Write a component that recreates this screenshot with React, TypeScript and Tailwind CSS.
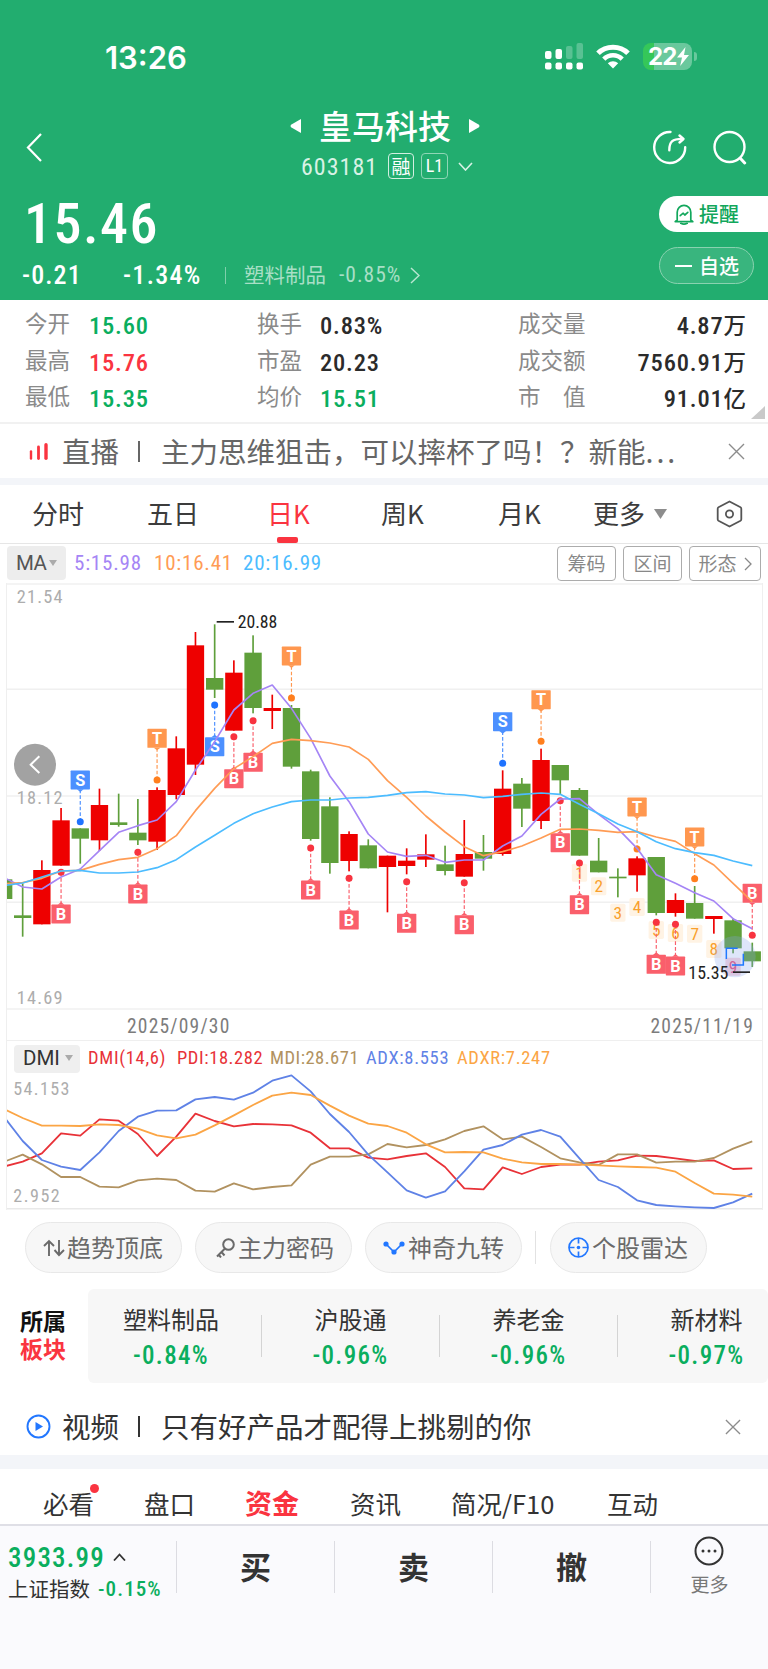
import React from "react";

type Candle = [up: boolean, top: number, bottom: number, high: number, low: number];
type Marker = [type: "B" | "S" | "T", index: number, badgeY: number, dotY: number];

// Los graficos usan 3 unidades por pixel
const STEP = 57.6;
const cx = (i: number) => 68 + STEP * i;

const candles: Candle[] = [
  [false, 1036, 1044, 940, 1100],
  [true, 900, 1063, 871, 1063],
  [true, 751, 887, 714, 887],
  [false, 775, 806, 775, 881],
  [true, 705, 811, 656, 843],
  [false, 757, 765, 671, 770],
  [false, 788, 811, 687, 825],
  [true, 660, 815, 652, 840],
  [true, 535, 675, 499, 688],
  [true, 226, 584, 186, 615],
  [false, 324, 359, 163, 384],
  [true, 308, 482, 271, 482],
  [false, 248, 414, 196, 430],
  [true, 414, 423, 374, 477],
  [false, 414, 590, 405, 596],
  [false, 604, 807, 599, 812],
  [false, 709, 879, 682, 911],
  [true, 792, 873, 784, 904],
  [false, 826, 895, 808, 895],
  [true, 857, 891, 857, 1027],
  [true, 872, 888, 835, 913],
  [true, 853, 869, 793, 891],
  [false, 883, 903, 827, 916],
  [true, 852, 920, 750, 920],
  [false, 846, 866, 795, 902],
  [true, 656, 852, 601, 857],
  [false, 641, 716, 624, 771],
  [true, 570, 753, 536, 777],
  [false, 585, 631, 585, 672],
  [false, 660, 857, 654, 857],
  [false, 872, 907, 804, 907],
  [false, 920, 925, 895, 982],
  [true, 865, 916, 859, 965],
  [false, 861, 1029, 861, 1036],
  [true, 990, 1029, 970, 1040],
  [false, 999, 1046, 948, 1046],
  [true, 1038, 1047, 1038, 1091],
  [false, 1051, 1135, 1045, 1150],
  [false, 1144, 1174, 1118, 1191],
];

const markers: Marker[] = [
  ["B", 2, 1032, 907],
  ["S", 3, 630, 755],
  ["B", 6, 972, 847],
  ["T", 7, 505, 630],
  ["S", 10, 530, 405],
  ["B", 11, 626, 500],
  ["B", 12, 577, 452],
  ["T", 14, 258, 384],
  ["B", 15, 960, 834],
  ["B", 17, 1050, 925],
  ["B", 20, 1060, 935],
  ["B", 23, 1064, 938],
  ["S", 25, 455, 580],
  ["T", 27, 389, 514],
  ["B", 28, 818, 692],
  ["B", 29, 1004, 879],
  ["T", 32, 711, 837],
  ["B", 33, 1183, 1057],
  ["B", 34, 1188, 1063],
  ["T", 35, 801, 926],
  ["B", 38, 970, 1096],
];

const markerColors = {
  B: { badge: "#fa5f6b", dot: "#f8333f" },
  S: { badge: "#4c90ff", dot: "#1f73ff" },
  T: { badge: "#ff974f", dot: "#ff7f1e" },
};

const nineTurns = [908, 949, 1028, 1011, 1080, 1089, 1091, 1137, 1190];

// El primer valor es el borde izquierdo del marco
const maLines = [
  {
    color: "#a585f5",
    data: [926, 951, 957, 921, 897, 842, 787, 767, 750, 695, 600, 515, 420, 370, 345, 415, 505, 618, 695, 792, 846, 859, 856, 877, 870, 870, 828, 798, 733, 687, 686, 733, 776, 835, 914, 940, 968, 993, 1046, 1076],
  },
  {
    color: "#ff9c55",
    data: [941, 938, 925, 903, 901, 883, 869, 862, 836, 797, 722, 655, 596, 560, 520, 508, 512, 519, 531, 568, 632, 682, 738, 786, 830, 857, 845, 828, 804, 778, 777, 781, 787, 785, 801, 814, 851, 885, 940, 995],
  },
  {
    color: "#4cbcff",
    data: [946, 939, 921, 903, 901, 909, 909, 906, 893, 869, 831, 796, 760, 731, 711, 695, 690, 690, 684, 682, 676, 668, 665, 672, 675, 683, 679, 673, 669, 673, 703, 731, 762, 785, 815, 836, 848, 856, 873, 887],
  },
];

const dmiLines = [
  {
    color: "#e83238",
    data: [468, 455, 430, 370, 377, 328, 332, 372, 438, 380, 311, 333, 349, 342, 343, 346, 368, 415, 415, 443, 448, 438, 430, 471, 535, 538, 472, 492, 471, 464, 464, 455, 451, 437, 438, 445, 453, 451, 477, 475],
  },
  {
    color: "#b19260",
    data: [453, 434, 463, 501, 501, 530, 532, 511, 506, 510, 542, 545, 520, 538, 531, 526, 464, 440, 440, 433, 402, 412, 405, 388, 363, 349, 388, 380, 411, 445, 457, 465, 433, 433, 458, 455, 455, 444, 416, 394],
  },
  {
    color: "#5f82e6",
    data: [328, 393, 450, 470, 480, 427, 363, 320, 302, 301, 268, 261, 269, 248, 212, 196, 244, 312, 366, 434, 487, 541, 563, 544, 484, 419, 405, 374, 360, 380, 445, 510, 531, 571, 585, 589, 592, 594, 577, 551],
  },
  {
    color: "#fba545",
    data: [300, 324, 347, 347, 348, 343, 345, 356, 376, 385, 374, 346, 316, 285, 257, 248, 255, 287, 317, 341, 348, 368, 403, 427, 426, 427, 446, 457, 462, 462, 464, 466, 469, 471, 473, 485, 519, 551, 554, 560],
  },
];

const toPoints = (data: number[]) =>
  data.map((y, i) => `${i === 0 ? 18 : cx(i - 1)},${y}`).join(" ");

const StatusBar = () => (
  <div className="flex h-[86px] pt-[43px]">
    <div className="ml-[105px] mt-[1px] h-7 w-[440px] font-['Inter'] text-[31px] font-semibold leading-7">13:26</div>
    <svg className="h-[27px] w-[38px]" viewBox="0 0 38 27" fill="#fff">
      <rect x="0" y="8" width="6.5" height="8" rx="2" />
      <rect x="10.5" y="6" width="6.5" height="10" rx="2" />
      <rect x="21" y="3" width="6.5" height="13" rx="2" opacity=".25" />
      <rect x="31.5" y="0" width="6.5" height="16" rx="2" opacity=".25" />
      {[0, 10.5, 21, 31.5].map((x) => (
        <rect key={x} x={x} y="19.5" width="6.5" height="7" rx="2" />
      ))}
    </svg>
    <svg className="ml-[13px] mt-[1px] h-[25px] w-[34px]" viewBox="0 0 34 25" fill="none" stroke="#fff">
      <path d="M2 9.2C10 1.1 24 1.1 32 9.2" strokeWidth="5" />
      <path d="M7.8 15.2c5.2-5.2 13.2-5.2 18.4 0" strokeWidth="4.6" />
      <path d="M17 24.5l-5.2-5.3c3-2.7 7.4-2.7 10.4 0z" fill="#fff" stroke="none" />
    </svg>
    <div className="ml-[13px] flex h-[27px] w-[49px] items-center overflow-hidden rounded-[8px] bg-[linear-gradient(90deg,#35c759_11px,#6ac89d_11px)]">
      <span className="ml-[5px] font-['Inter'] text-[24px] font-bold leading-none tracking-[-0.8px]">22</span>
      <svg className="h-[19px] w-[12px]" viewBox="0 0 12 19" fill="#fff">
        <path d="M8.5 0L0 10.6h5L3.2 19 12 8H7z" />
      </svg>
    </div>
    <div className="ml-[2px] mt-[9px] h-[9px] w-[3px] rounded-r-full bg-[#6ac89d]" />
  </div>
);

const Header = () => (
  <header className="h-[300px] bg-[#22ad6f] text-white">
    <StatusBar />
    <div className="flex h-[104px]">
      <svg className="ml-[26px] mt-[47px] h-[29px] w-[16px]" viewBox="0 0 16 29" fill="none" stroke="#fff" strokeWidth="2.2">
        <path d="M15 1L2 14.5 15 28" />
      </svg>
      <div className="ml-[230px] w-[226px]">
        <div className="mt-[20px] flex h-[40px] items-center justify-center">
          <svg className="h-[16px] w-[12px]" viewBox="0 0 12 16" fill="#fff">
            <path d="M11 1v14L1 9.2Q0 8 1 6.8z" />
          </svg>
          <span className="relative top-[-1px] mx-[17px] text-[33px] font-medium leading-none">皇马科技</span>
          <svg className="h-[16px] w-[12px]" viewBox="0 0 12 16" fill="#fff">
            <path d="M1 1v14l10-5.8q1-1.2 0-2.4z" />
          </svg>
        </div>
        <div className="mt-[6px] flex h-[28px] items-center pl-[29px]">
          <span className="relative top-[1px] w-[87px] font-['Roboto'] text-[24px] leading-none tracking-[1px] text-[#d8f2e5]">603181</span>
          <span className="flex h-[26px] w-[26px] items-center justify-center rounded-[4px] border border-[#d2efe1] text-[19px] leading-none">
            <span className="relative top-[-1px]">融</span>
          </span>
          <span className="ml-[7px] flex h-[26px] w-[27px] items-center justify-center rounded-[4px] border border-[#8fd6b6] font-['Roboto'] text-[18px] leading-none">L1</span>
          <svg className="ml-[10px] h-[9px] w-[15px]" viewBox="0 0 15 9" fill="none" stroke="#d8f2e5" strokeWidth="1.6">
            <path d="M1 1l6.5 7L14 1" />
          </svg>
        </div>
      </div>
      <svg className="ml-[154px] mt-[43px] h-[36px] w-[36px]" viewBox="0 0 36 36" fill="none" stroke="#fff" strokeWidth="2.4" strokeLinecap="round" strokeLinejoin="round">
        <path d="M18.5 3A15.5 15.5 0 1 0 33.2 18.2" />
        <path d="M17.3 21.2c0-8.5 2.8-11.3 13-11.3" />
        <path d="M27.5 6.5l4 3.5-4 3.5" />
      </svg>
      <svg className="ml-[24px] mt-[43px] h-[36px] w-[36px]" viewBox="0 0 36 36" fill="none" stroke="#fff" strokeWidth="2.4" strokeLinecap="round">
        <circle cx="17.5" cy="18" r="15" />
        <path d="M28.5 29.5l4.2 4.5" strokeWidth="3" />
      </svg>
    </div>
    <div className="flex h-[110px] justify-between">
      <div>
        <div className="ml-[24px] mt-[6px] h-[56px] font-['Roboto'] text-[56px] font-medium leading-[56px] tracking-[1.5px]">15.46</div>
        <div className="mt-[9px] flex h-[28px] items-center font-['Roboto']">
          <span className="ml-[22px] w-[101px] text-[26px] font-medium tracking-[1.1px]">-0.21</span>
          <span className="w-[102px] text-[26px] font-medium tracking-[1.3px]">-1.34%</span>
          <span className="h-[17px] w-px bg-[#7fcfab]" />
          <span className="relative top-[-1px] ml-[18px] w-[95px] font-['Noto_Sans_CJK_SC'] text-[20.5px] text-[#a8dfc6]">塑料制品</span>
          <span className="w-[71px] text-[21.5px] tracking-[1px] text-[#a8dfc6]">-0.85%</span>
          <svg className="h-[17px] w-[10px]" viewBox="0 0 10 17" fill="none" stroke="#b9e6d1" strokeWidth="1.5">
            <path d="M1 1l8 7.5L1 16" />
          </svg>
        </div>
      </div>
      <div className="w-[109px] pt-[6px]">
        <button className="flex h-[36px] w-full items-center rounded-l-full bg-white text-[20px] font-medium leading-none text-[#12a75c]">
          <svg className="ml-[15px] mr-[5px] h-[21px] w-[20px]" viewBox="0 0 20 21" fill="none" stroke="#12a75c" strokeWidth="1.7" strokeLinejoin="round" strokeLinecap="round">
            <path d="M3.2 16V8.2a6.8 6.8 0 0 1 13.6 0V16l2 1.6H1.2z" />
            <path d="M6.8 19.3q3.2 1.6 6.4 0" />
            <path d="M6.2 11.6l3-2.4 1.6 1.8 3-2.6" />
          </svg>
          <span>提醒</span>
        </button>
        <button className="mt-[15px] flex h-[37px] w-[95px] items-center rounded-full border border-[#8ad2b0] bg-[#39b57e] text-[20px] font-medium leading-none">
          <span className="ml-[15px] mr-[7px] h-[2px] w-[17px] bg-white" />
          <span>自选</span>
        </button>
      </div>
    </div>
  </header>
);

const stats = [
  ["今开", "15.60", "text-[#0aae5e]", "换手", "0.83%", "text-[#2b2b2b]", "成交量", "4.87", "万"],
  ["最高", "15.76", "text-[#fa3440]", "市盈", "20.23", "text-[#2b2b2b]", "成交额", "7560.91", "万"],
  ["最低", "15.35", "text-[#0aae5e]", "均价", "15.51", "text-[#0aae5e]", "市　值", "91.01", "亿"],
];

const Stats = () => (
  <section className="relative h-[124px] border-b-2 border-[#f1f1f1] pt-[7px]">
    {stats.map(([l1, v1, c1, l2, v2, c2, l3, v3, unit]) => (
      <div key={l1} className="flex h-[36.5px] items-center pl-[25px] pr-[22px] text-[22.5px] leading-none">
        <span className="relative top-[-3px] w-[64px] text-[#8a8a8a]">{l1}</span>
        <span className={`relative top-[1px] w-[168px] font-['Roboto'] text-[24.5px] font-medium tracking-[0.8px] ${c1}`}>{v1}</span>
        <span className="relative top-[-3px] w-[63px] text-[#8a8a8a]">{l2}</span>
        <span className={`relative top-[1px] w-[198px] font-['Roboto'] text-[24.5px] font-medium tracking-[0.8px] ${c2}`}>{v2}</span>
        <span className="relative top-[-3px] text-[#8a8a8a]">{l3}</span>
        <span className="relative top-[1px] ml-auto font-['Roboto'] text-[24.5px] font-medium tracking-[0.8px] text-[#2b2b2b]">{v3}</span>
        <span className="relative top-[-1px] font-medium text-[#2b2b2b]">{unit}</span>
      </div>
    ))}
    <svg className="absolute bottom-[3px] right-[3px] h-[13px] w-[14px]" viewBox="0 0 14 13">
      <path d="M14 0v13H0z" fill="#c9c9c9" />
    </svg>
  </section>
);

const CloseIcon = ({ className }: { className: string }) => (
  <svg className={className} viewBox="0 0 17 17" fill="none" stroke="#8c8c8c" strokeWidth="1.4">
    <path d="M1 1l15 15M16 1L1 16" />
  </svg>
);

const LiveRow = () => (
  <section className="flex h-[54px] items-center whitespace-nowrap pl-[29px] text-[28.5px] leading-none text-[#666]">
    <svg className="h-[17px] w-[19px]" viewBox="0 0 19 17" stroke="#fa3440" strokeLinecap="round">
      <path d="M2 8.5v7" strokeWidth="2.4" />
      <path d="M9.5 4v11.5" strokeWidth="2.8" />
      <path d="M17 1.8v13.4" strokeWidth="3.4" />
    </svg>
    <span className="ml-[14px] w-[57px]">直播</span>
    <span className="ml-[19px] mr-[21px] h-[21px] w-[2px] bg-[#666]" />
    <span className="w-[567px]">
      主力思维狙击，可以摔杯了吗！？新能<span className="tracking-[3px]">...</span>
    </span>
    <CloseIcon className="h-[17px] w-[17px]" />
  </section>
);

const periods = [
  ["分时", "ml-[32px] w-[115px]"],
  ["五日", "w-[120px]"],
  ["日K", "w-[114px] text-[#fa3440]"],
  ["周K", "w-[117px]"],
  ["月K", "w-[95px]"],
  ["更多", "w-[61px]"],
];

const PeriodTabs = () => (
  <nav className="relative flex h-[59px] items-center border-b border-[#e6e6e6] text-[26px] leading-none text-[#3c3c3c]">
    {periods.map(([name, cls]) => (
      <span key={name} className={`relative top-[-1px] ${cls}`}>
        {name}
      </span>
    ))}
    <svg className="h-[10px] w-[13px]" viewBox="0 0 13 10">
      <path d="M0 0h13L6.5 10z" fill="#8d8d8d" />
    </svg>
    <svg className="ml-[49px] h-[28px] w-[27px]" viewBox="0 0 27 28" fill="none" stroke="#555" strokeWidth="1.8" strokeLinejoin="round">
      <path d="M13.5 1.5l11 5.8q.8.5.8 1.5v10.4q0 1-.8 1.5l-11 5.8-11-5.8q-.8-.5-.8-1.5V8.8q0-1 .8-1.5z" />
      <circle cx="13.5" cy="14" r="3.6" />
    </svg>
    <span className="absolute bottom-0 left-[277px] h-[6px] w-[21px] rounded-[2px] bg-[#fa3440]" />
  </nav>
);

const MaRow = () => (
  <div className="flex h-[39px] items-start pt-[2px]">
    <div className="ml-[7px] flex h-[34px] w-[59px] items-center rounded-[4px] bg-[#ededed] pl-[9px] font-['Roboto'] text-[20.5px] leading-none tracking-[-0.5px] text-[#555] [font-stretch:100%]">
      MA
      <svg className="ml-[3px] h-[6px] w-[8px]" viewBox="0 0 8 6">
        <path d="M0 0h8L4 6z" fill="#ababab" />
      </svg>
    </div>
    <div className="flex h-[35px] w-[491px] items-center pl-[8px] font-['Roboto'] text-[21px] leading-none tracking-[0.8px]">
      <span className="w-[80px] text-[#a585f5]">5:15.98</span>
      <span className="w-[89px] text-[#ff9c55]">10:16.41</span>
      <span className="text-[#4cbcff]">20:16.99</span>
    </div>
    <div className="flex gap-[7px] text-[19px] leading-none text-[#888]">
      <span className="flex h-[35px] w-[59px] items-center justify-center rounded-[4px] border border-[#acacac] pb-[2px]">筹码</span>
      <span className="flex h-[35px] w-[59px] items-center justify-center rounded-[4px] border border-[#acacac] pb-[2px]">区间</span>
      <span className="flex h-[35px] w-[72px] items-center justify-center gap-[7px] rounded-[4px] border border-[#acacac] pb-[2px]">
        形态
        <svg className="relative top-[1px] h-[14px] w-[8px]" viewBox="0 0 8 14" fill="none" stroke="#888" strokeWidth="1.3">
          <path d="M1 1l6 6-6 6" />
        </svg>
      </span>
    </div>
  </div>
);

const MarkerBadge = ({ marker }: { marker: Marker }) => {
  const [type, index, badgeY, dotY] = marker;
  const x = cx(index);
  const { badge, dot } = markerColors[type];
  const dir = dotY < badgeY ? -1 : 1;
  return (
    <g>
      <line x1={x} x2={x} y1={dotY} y2={badgeY + dir * 28} stroke={badge} strokeWidth="3.5" strokeDasharray="11 6" />
      <circle cx={x} cy={dotY} r="10.5" fill={dot} />
      <rect x={x - 29} y={badgeY - 28.5} width="58" height="57" rx="2" fill={badge} />
      <path d={`M${x - 10} ${badgeY + dir * 28}h20L${x} ${badgeY + dir * 36}z`} fill={badge} />
      <text x={x} y={badgeY + 17} textAnchor="middle" fontSize="49" fontWeight="700" fill="#fff" className="[font-stretch:100%]">
        {type}
      </text>
    </g>
  );
};

const CandleChart = () => (
  <svg className="block h-[427px] w-[755px]" viewBox="21 39 2265 1281" fontFamily="Roboto, sans-serif">
    {[42, 358, 678, 997, 1317].map((y) => (
      <line key={y} x1="18" x2="2289" y1={y} y2={y} stroke="#f0f0f0" strokeWidth="4.5" />
    ))}
    <g fontSize="55" fill="#adadad">
      <text x="50" y="100" textLength="138">21.54</text>
      <text x="50" y="702" textLength="138">18.12</text>
      <text x="50" y="1303" textLength="138">14.69</text>
    </g>
    <rect x="18" y="928" width="19" height="59" fill="#5f9f3b" />
    {candles.map(([up, top, bottom, high, low], i) => (
      <g key={i} fill={up ? "#ee0000" : "#5f9f3b"}>
        <rect x={cx(i) - 2.5} y={high} width="5" height={low - high} />
        <rect x={cx(i) - 26} y={top} width="52" height={bottom - top} />
      </g>
    ))}
    {nineTurns.map((y, i) => (
      <g key={i}>
        <rect x={cx(29 + i) - 23} y={y - 27} width="46" height="54" rx="5" fill={i === 8 ? "#f9d5de" : "#fff3e4"} />
        <text x={cx(29 + i)} y={y + 18} textAnchor="middle" fontSize="52" fill={i === 8 ? "#ea4c78" : "#f9a02c"}>
          {i + 1}
        </text>
      </g>
    ))}
    {markers.map((m) => (
      <MarkerBadge key={`${m[0]}${m[1]}`} marker={m} />
    ))}
    {maLines.map((l) => (
      <polyline key={l.color} points={toPoints(l.data)} fill="none" stroke={l.color} strokeWidth="5" strokeLinejoin="round" />
    ))}
    <circle cx="2205" cy="1160" r="62" fill="#8aa6ee" opacity=".28" />
    <path d="M2179 1167v-32h34M2230 1151v34h-34" fill="none" stroke="#1f78ff" strokeWidth="4.5" />
    <g fill="#222" fontSize="53">
      <rect x="650" y="153" width="52" height="5" />
      <text x="713" y="175" textLength="119" lengthAdjust="spacingAndGlyphs">20.88</text>
      <rect x="2199" y="1204" width="51" height="5" />
      <text x="2065" y="1227" textLength="120" lengthAdjust="spacingAndGlyphs">15.35</text>
    </g>
    <circle cx="105" cy="584" r="63" fill="#a2a2a2" />
    <path d="M118 559l-26 25 26 25" fill="none" stroke="#fff" strokeWidth="6" />
  </svg>
);

const DmiChart = () => (
  <svg className="block h-[137px] w-[755px]" viewBox="21 189 2265 411" fontFamily="Roboto, sans-serif">
    <g fontSize="54" fill="#adadad">
      <text x="40" y="254" textLength="168">54.153</text>
      <text x="40" y="577" textLength="139">2.952</text>
    </g>
    <line x1="18" x2="2289" y1="596" y2="596" stroke="#e9e9e9" strokeWidth="4.5" />
    {dmiLines.map((l) => (
      <polyline key={l.color} points={toPoints(l.data)} fill="none" stroke={l.color} strokeWidth="5.5" strokeLinejoin="round" />
    ))}
  </svg>
);

const ChartPanel = () => (
  <div className="ml-[6px] w-[757px] border-x border-[#efefef] font-['Roboto']">
    <CandleChart />
    <div className="flex h-[30px] items-center justify-between pl-[120px] pr-[8px] pt-[3px] text-[19.5px] leading-none tracking-[1.2px] text-[#7c7c7c]">
      <span>2025/09/30</span>
      <span>2025/11/19</span>
    </div>
    <div className="flex h-[33px] items-center border-t border-[#efefef] pt-[3px] text-[18.5px] leading-none">
      <div className="ml-[7px] flex h-[28px] w-[66px] items-center rounded-[4px] bg-[#efefef] pb-[1px] pl-[9px] text-[20.5px] text-[#333] [font-stretch:100%]">
        DMI
        <svg className="ml-[5px] h-[6px] w-[8px]" viewBox="0 0 8 6">
          <path d="M0 0h8L4 6z" fill="#ababab" />
        </svg>
      </div>
      <span className="ml-[8px] w-[89px] tracking-[0.7px] text-[#e83238]">DMI(14,6)</span>
      <span className="w-[93px] tracking-[0.6px] text-[#e83238]">PDI:18.282</span>
      <span className="w-[96px] tracking-[0.5px] text-[#b19260]">MDI:28.671</span>
      <span className="w-[91px] tracking-[0.7px] text-[#5f82e6]">ADX:8.553</span>
      <span className="tracking-[0.7px] text-[#fba545]">ADXR:7.247</span>
    </div>
    <DmiChart />
  </div>
);

const chipClass =
  "flex h-[51px] w-[157px] items-center whitespace-nowrap rounded-full border border-[#e8e8e8] bg-[#f7f7f7] text-[24px] leading-none text-[#6a6a6a]";

const Chips = () => (
  <div className="flex h-[79px] items-start pl-[25px] pt-[12px]">
    <div className={chipClass}>
      <svg className="ml-[17px] mr-[2px] h-[18px] w-[22px] shrink-0" viewBox="0 0 22 18" fill="none" stroke="#6a6a6a" strokeWidth="1.9">
        <path d="M6 17V2M1 7l5-5 5 5M16 1v15M11.5 11l4.5 5 5-5" />
      </svg>
      <span className="relative top-[-1px]">趋势顶底</span>
    </div>
    <div className={`ml-[13px] ${chipClass}`}>
      <svg className="ml-[20px] mr-[3px] h-[20px] w-[19px] shrink-0" viewBox="0 0 19 20" fill="none" stroke="#6a6a6a" strokeWidth="2">
        <circle cx="12.5" cy="6.5" r="5.3" />
        <path d="M9 10.5L1 18.5M5.5 14l3 3.5M2.5 16.5l2.5 3" />
      </svg>
      <span className="relative top-[-1px]">主力密码</span>
    </div>
    <div className={`ml-[13px] ${chipClass}`}>
      <svg className="ml-[17px] mr-[3px] h-[14px] w-[22px] shrink-0" viewBox="0 0 22 14">
        <path d="M3 3l8 8 8-8" fill="none" stroke="#2277ff" strokeWidth="1.7" />
        <circle cx="3" cy="3" r="2.6" fill="#2277ff" />
        <circle cx="19" cy="3" r="2.6" fill="#2277ff" />
        <circle cx="11" cy="11" r="2.6" fill="#2277ff" />
      </svg>
      <span className="relative top-[-1px]">神奇九转</span>
    </div>
    <span className="ml-[13px] mr-[14px] mt-[9px] h-[33px] w-px bg-[#e2e2e2]" />
    <div className={chipClass}>
      <svg className="ml-[17px] mr-[3px] h-[21px] w-[21px] shrink-0" viewBox="0 0 21 21" fill="none" stroke="#2277ff" strokeWidth="1.7">
        <circle cx="10.5" cy="10.5" r="9.5" />
        <path d="M10.5 1v5.5M10.5 14.5V20M1 10.5h5.5M14.5 10.5H20" />
        <circle cx="10.5" cy="10.5" r="1.8" fill="#2277ff" stroke="none" />
      </svg>
      <span className="relative top-[-1px]">个股雷达</span>
    </div>
  </div>
);

const sectors = [
  ["塑料制品", "-0.84%"],
  ["沪股通", "-0.96%"],
  ["养老金", "-0.96%"],
  ["新材料", "-0.97%"],
];

const Sectors = () => (
  <div className="flex h-[94px]">
    <div className="w-[88px] pl-[20px] pt-[17px] text-[23px] font-bold leading-[28px] text-[#111]">
      <div>所属</div>
      <div className="text-[#fa3440]">板块</div>
    </div>
    <div className="flex w-[680px] items-center overflow-hidden rounded-[6px] bg-[#f7f7f7]">
      {sectors.map(([name, pct], i) => (
        <React.Fragment key={name}>
          {i > 0 && <span className="h-[42px] w-px shrink-0 bg-[#d4d4d4]" />}
          <div className={`flex shrink-0 flex-col items-center pt-[2px] ${i === 0 ? "w-[173px] pr-[7px]" : "w-[177px]"}`}>
            <span className="text-[24px] leading-[34px] text-[#333]">{name}</span>
            <span className="mt-[4px] font-['Roboto'] text-[25px] font-medium leading-[32px] tracking-[1.3px] text-[#0aae5e]">{pct}</span>
          </div>
        </React.Fragment>
      ))}
    </div>
  </div>
);

const VideoRow = () => (
  <section className="flex h-[72px] items-center whitespace-nowrap pl-[26px] pt-[15px] text-[28.5px] leading-none text-[#333]">
    <svg className="h-[25px] w-[25px]" viewBox="0 0 25 25">
      <circle cx="12.5" cy="12.5" r="11" fill="none" stroke="#2277ff" strokeWidth="1.9" />
      <path d="M9.5 8v9l7.5-4.5z" fill="#2277ff" />
    </svg>
    <span className="ml-[11px] w-[57px]">视频</span>
    <span className="ml-[19px] mr-[21px] h-[21px] w-[2px] bg-[#333]" />
    <span className="w-[564px]">只有好产品才配得上挑剔的你</span>
    <CloseIcon className="h-[16px] w-[16px]" />
  </section>
);

const infoTabs = [
  ["必看", "w-[101px]"],
  ["盘口", "w-[101px]"],
  ["资金", "w-[105px] text-[27px] font-bold text-[#fa3440]"],
  ["资讯", "w-[101px]"],
  ["简况/F10", "w-[156px]"],
  ["互动", ""],
];

const InfoTabs = () => (
  <nav className="relative flex h-[55px] items-center pl-[43px] pt-[14px] text-[25.5px] leading-none text-[#333]">
    {infoTabs.map(([name, cls]) => (
      <span key={name} className={`relative top-[-1px] ${cls}`}>
        {name}
      </span>
    ))}
    <span className="absolute left-[90px] top-[15px] h-[9px] w-[9px] rounded-full bg-[#fa3440]" />
  </nav>
);

const BottomBar = () => (
  <footer className="flex h-[145px] border-t-2 border-[#dfdfe6] bg-[#fafafd]">
    <div className="w-[176px] pl-[8px] pt-[17px]">
      <div className="flex h-[30px] items-center font-['Roboto'] text-[27px] font-medium leading-none text-[#0aae5e]">
        <span className="w-[105px] tracking-[1.2px]">3933.99</span>
        <svg className="relative top-[-1px] h-[8px] w-[13px]" viewBox="0 0 13 8" fill="none" stroke="#333" strokeWidth="1.8">
          <path d="M1 7.5l5.5-6 5.5 6" />
        </svg>
      </div>
      <div className="mt-[3px] flex h-[26px] items-center text-[20.5px] leading-none text-[#333]">
        <span className="relative top-[-1px] w-[90px]">上证指数</span>
        <span className="font-['Roboto'] text-[21px] font-medium tracking-[1.1px] text-[#0aae5e]">-0.15%</span>
      </div>
    </div>
    {["买", "卖", "撤"].map((name) => (
      <div key={name} className="flex h-[82px] w-[158px] items-center">
        <span className="h-[52px] w-px bg-[#dcdce2]" />
        <span className="relative top-[-2px] w-full text-center text-[31px] font-bold leading-none text-[#333]">{name}</span>
      </div>
    ))}
    <div className="flex h-[82px] w-[118px] items-center">
      <span className="h-[52px] w-px bg-[#dcdce2]" />
      <div className="flex w-full flex-col items-center pb-[6px]">
        <svg className="h-[30px] w-[30px]" viewBox="0 0 30 30" fill="#333">
          <circle cx="15" cy="15" r="13.5" fill="none" stroke="#333" strokeWidth="2" />
          <circle cx="9" cy="15" r="1.5" />
          <circle cx="15" cy="15" r="1.5" />
          <circle cx="21" cy="15" r="1.5" />
        </svg>
        <span className="mt-[8px] text-[19px] leading-none text-[#777]">更多</span>
      </div>
    </div>
  </footer>
);

const App = () => {
  return (
    <div className="h-[1669px] w-[768px] overflow-hidden bg-white font-['Noto_Sans_CJK_SC',sans-serif] [font-stretch:85%]">
      <Header />
      <Stats />
      <LiveRow />
      <div className="h-[7px] bg-[#f3f5f9]" />
      <PeriodTabs />
      <MaRow />
      <ChartPanel />
      <Chips />
      <Sectors />
      <VideoRow />
      <div className="h-[14px] bg-[#f3f5f9]" />
      <InfoTabs />
      <BottomBar />
    </div>
  );
};

export default App;
